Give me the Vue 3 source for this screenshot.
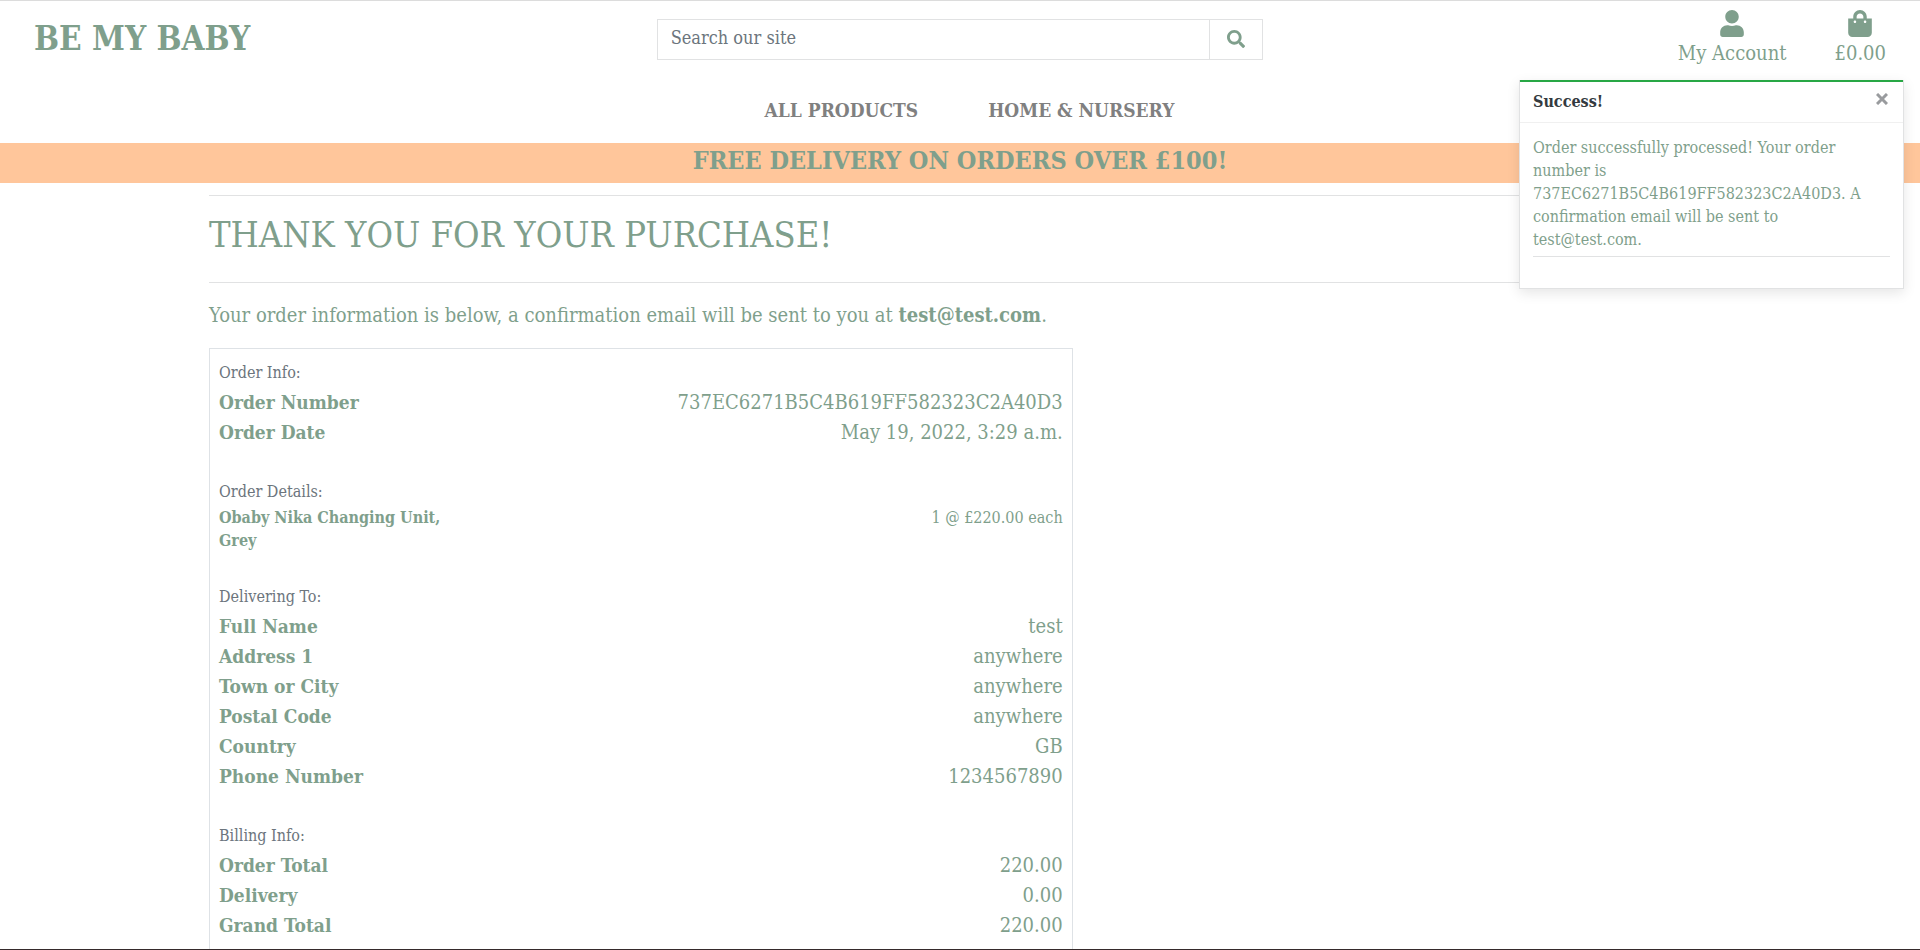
<script setup>
import { ref } from 'vue'

const query = ref('')
const toastOpen = ref(true)
const email = 'test@test.com'
const orderNumber = '737EC6271B5C4B619FF582323C2A40D3'

const sections = [
  {
    title: 'Order Info:',
    rows: [
      ['Order Number', orderNumber],
      ['Order Date', 'May 19, 2022, 3:29 a.m.'],
    ],
  },
  {
    title: 'Order Details:',
    small: true,
    rows: [['Obaby Nika Changing Unit, Grey', '1 @ £220.00 each']],
  },
  {
    title: 'Delivering To:',
    rows: [
      ['Full Name', 'test'],
      ['Address 1', 'anywhere'],
      ['Town or City', 'anywhere'],
      ['Postal Code', 'anywhere'],
      ['Country', 'GB'],
      ['Phone Number', '1234567890'],
    ],
  },
  {
    title: 'Billing Info:',
    rows: [
      ['Order Total', '220.00'],
      ['Delivery', '0.00'],
      ['Grand Total', '220.00'],
    ],
  },
]
</script>

<template>
  <div class="page">
    <header>
      <div class="top">
        <a class="logo" href="#">BE MY BABY</a>
        <form class="search" role="search" @submit.prevent>
          <input v-model="query" type="text" placeholder="Search our site" aria-label="Search our site" />
          <button type="submit" aria-label="Search">
            <svg viewBox="0 0 512 512" width="18" height="18" aria-hidden="true">
              <path d="M505 442.7L405.3 343c-4.5-4.5-10.6-7-17-7H372c27.6-35.3 44-79.7 44-128C416 93.1 322.9 0 208 0S0 93.1 0 208s93.1 208 208 208c48.3 0 92.7-16.4 128-44v16.3c0 6.4 2.5 12.5 7 17l99.7 99.7c9.4 9.4 24.6 9.4 33.9 0l28.3-28.3c9.4-9.4 9.4-24.6.1-34zM208 336c-70.7 0-128-57.2-128-128 0-70.7 57.2-128 128-128 70.7 0 128 57.2 128 128 0 70.7-57.2 128-128 128z" />
            </svg>
          </button>
        </form>
        <div class="links">
          <a href="#">
            <svg viewBox="0 0 448 512" width="24" height="27" aria-hidden="true">
              <path d="M224 256c70.7 0 128-57.3 128-128S294.7 0 224 0 96 57.3 96 128s57.3 128 128 128zm89.6 32h-16.7c-22.2 10.2-46.9 16-72.9 16s-50.6-5.8-72.9-16h-16.7C60.2 288 0 348.2 0 422.4V464c0 26.5 21.5 48 48 48h352c26.5 0 48-21.5 48-48v-41.6c0-74.2-60.2-134.4-134.4-134.4z" />
            </svg>
            <span>My Account</span>
          </a>
          <a href="#">
            <svg viewBox="0 0 448 512" width="24" height="27" aria-hidden="true">
              <path d="M352 160v-32C352 57.42 294.579 0 224 0 153.42 0 96 57.42 96 128v32H0v272c0 44.183 35.817 80 80 80h288c44.183 0 80-35.817 80-80V160h-96zm-192-32c0-35.29 28.71-64 64-64s64 28.71 64 64v32H160v-32zm160 120c-13.255 0-24-10.745-24-24s10.745-24 24-24 24 10.745 24 24-10.745 24-24 24zm-192 0c-13.255 0-24-10.745-24-24s10.745-24 24-24 24 10.745 24 24-10.745 24-24 24z" />
            </svg>
            <span>£0.00</span>
          </a>
        </div>
      </div>
      <nav>
        <a href="#">ALL PRODUCTS</a>
        <a href="#">HOME &amp; NURSERY</a>
      </nav>
    </header>

    <div class="banner">FREE DELIVERY ON ORDERS OVER £100!</div>

    <main>
      <h1>THANK YOU FOR YOUR PURCHASE!</h1>
      <p class="intro">
        Your order information is below, a confirmation email will be sent to you at
        <strong>{{ email }}</strong>.
      </p>
      <div class="order">
        <table v-for="s in sections" :key="s.title" :class="{ small: s.small }">
          <caption>{{ s.title }}</caption>
          <tbody>
            <tr v-for="[name, value] in s.rows" :key="name">
              <th scope="row">{{ name }}</th>
              <td>{{ value }}</td>
            </tr>
          </tbody>
        </table>
      </div>
    </main>

    <aside v-if="toastOpen" class="toast" role="status">
      <div class="toast-head">
        <strong>Success!</strong>
        <button type="button" aria-label="Close" @click="toastOpen = false">
          <svg viewBox="0 0 12 12" width="12" height="12" aria-hidden="true">
            <path d="M1 1l10 10M11 1l-10 10" />
          </svg>
        </button>
      </div>
      <div class="toast-body">
        <p>Order successfully processed! Your order number is {{ orderNumber }}. A confirmation email will be sent to {{ email }}.</p>
      </div>
    </aside>
  </div>
</template>

<style>
body {
  margin: 0;
  background: #fff;
}
</style>

<style scoped>
* {
  box-sizing: border-box;
}
.page {
  --green: #7f9f8c;
  --line: #e1e2e3;
  position: relative;
  height: 100vh;
  overflow: hidden;
  border-top: 1px solid #dcdcdc;
  border-bottom: 1px solid #352a2b;
  color: var(--green);
  font-family: "DejaVu Serif Condensed", "DejaVu Serif", serif;
  font-size: 20px;
  line-height: 30px;
}
a {
  color: inherit;
  text-decoration: none;
}
svg {
  display: block;
  fill: currentColor;
}
.top {
  display: grid;
  grid-template-columns: repeat(3, 1fr);
  gap: 16px;
  padding: 0 34px;
  height: 76px;
}
.logo {
  padding-top: 18px;
  font-size: 33px;
  line-height: 40px;
  font-weight: 700;
}
.search {
  display: flex;
  height: 41px;
  margin-top: 18px;
  border: 1px solid var(--line);
}
.search input {
  flex: 1;
  min-width: 0;
  padding: 0 13px 3px;
  border: 0;
  background: none;
  color: #6c757d;
  font: inherit;
  font-size: 18px;
}
.search input::placeholder {
  color: #6c757d;
  opacity: 1;
}
.search button {
  width: 53px;
  padding: 0 0 2px;
  display: grid;
  place-items: center;
  border: 0;
  border-left: 1px solid var(--line);
  background: none;
  color: var(--green);
}
.links {
  display: flex;
  justify-content: flex-end;
  gap: 48px;
  padding-top: 9px;
}
.links a {
  display: flex;
  flex-direction: column;
  align-items: center;
  gap: 1px;
}
nav {
  display: flex;
  justify-content: center;
  gap: 70px;
  height: 66px;
  padding: 18px 0 0 19px;
  color: #808080;
  font-size: 19px;
  font-weight: 700;
}
.banner {
  height: 40px;
  background: #ffc69b;
  font-size: 25px;
  line-height: 36px;
  font-weight: 700;
  text-align: center;
}
main {
  width: 80%;
  margin: 12px auto 0;
  padding: 0 17px;
}
h1 {
  margin: 0;
  padding: 18px 0 27px;
  border: solid var(--line);
  border-width: 1px 0;
  font-size: 36px;
  line-height: 41px;
  font-weight: 400;
}
.intro {
  margin: 17px 0 18px;
}
.order {
  width: calc((100% + 30px) * 7 / 12 - 30px);
  padding: 10px 9px;
  border: 1px solid #dee2e6;
}
table {
  width: 100%;
  margin-bottom: 31px;
  border-collapse: collapse;
}
caption {
  color: #6c757d;
  font-size: 16px;
  line-height: 28px;
  text-align: left;
}
th,
td {
  padding: 0;
  vertical-align: top;
}
th {
  width: 30%;
  font-size: 19px;
  text-align: left;
}
td {
  text-align: right;
}
.small th,
.small td {
  font-size: 16px;
  line-height: 23px;
}
.toast {
  position: absolute;
  top: 79px;
  right: 16px;
  width: 385px;
  border: 1px solid var(--line);
  border-top: 0;
  background: #fff;
  box-shadow: 0 4px 12px rgba(0, 0, 0, 0.1);
  font-size: 16px;
  line-height: 23px;
}
.toast-head {
  display: flex;
  justify-content: space-between;
  height: 43px;
  padding: 8px 15px 0 13px;
  border-top: 2px solid #28a745;
  border-bottom: 1px solid #f0f0f0;
  color: #343a40;
}
.toast-head button {
  align-self: flex-start;
  padding: 3px 0;
  border: 0;
  background: none;
}
.toast-head path {
  fill: none;
  stroke: #999b9e;
  stroke-width: 3;
}
.toast-body {
  padding: 13px 13px 31px;
}
.toast-body p {
  margin: 0;
  padding-bottom: 5px;
  border-bottom: 1px solid var(--line);
}
</style>
